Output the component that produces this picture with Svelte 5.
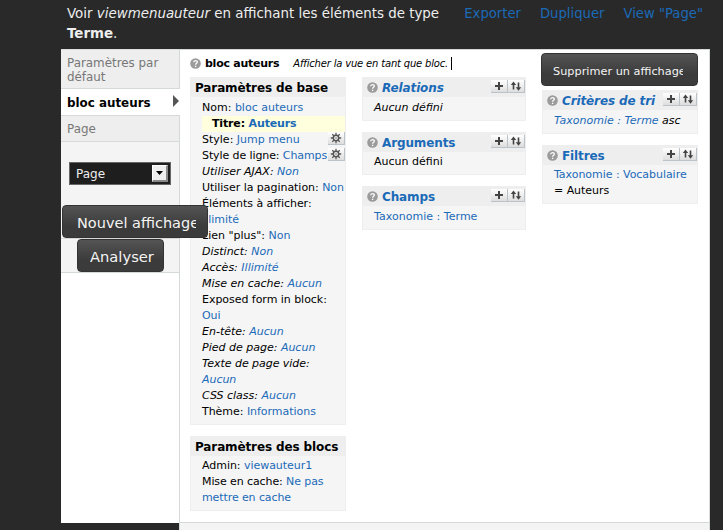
<script>
  const base = [
    { k: 'Nom:', v: 'bloc auteurs' },
    { k: 'Titre:', v: 'Auteurs', hot: true },
    { k: 'Style:', v: 'Jump menu', gear: true },
    { k: 'Style de ligne:', v: 'Champs', gear: true, tight: true },
    { k: 'Utiliser AJAX:', v: 'Non', i: true },
    { k: 'Utiliser la pagination:', v: 'Non', snug: true },
    { k: 'Éléments à afficher:', v: 'Illimité', br: true, snug: true },
    { k: 'Lien "plus":', v: 'Non' },
    { k: 'Distinct:', v: 'Non', i: true },
    { k: 'Accès:', v: 'Illimité', i: true },
    { k: 'Mise en cache:', v: 'Aucun', i: true },
    { k: 'Exposed form in block:', v: 'Oui', br: true, snug: true },
    { k: 'En-tête:', v: 'Aucun', i: true },
    { k: 'Pied de page:', v: 'Aucun', i: true },
    { k: 'Texte de page vide:', v: 'Aucun', i: true, br: true, snug: true },
    { k: 'CSS class:', v: 'Aucun', i: true },
    { k: 'Thème:', v: 'Informations', snug: true }
  ];
</script>

{#snippet help()}
  <svg class="help" width="11" height="11" viewBox="0 0 11 11">
    <circle cx="5.5" cy="5.5" r="5.3" fill="#9b9b9b" />
    <path d="M3.7 4.3C3.7 2 7.4 2 7.4 4.1C7.4 5.3 5.6 5.3 5.6 6.8M5.6 7.7V9" fill="none" stroke="#fff" stroke-width="1.3" />
  </svg>
{/snippet}

{#snippet tools()}
  <span class="tools">
    <span class="tool"><svg width="16" height="12" viewBox="0 0 16 12"><path d="M4 6h8M8 2v8" stroke="#444" stroke-width="2" /></svg></span>
    <span class="tool"><svg width="16" height="12" viewBox="0 0 16 12"><path d="M5.5 9.5V4M10.5 2.5v6" stroke="#444" stroke-width="1.6" /><path d="M2.8 5L5.5 1.5L8.2 5zM7.8 7.2L10.5 10.7L13.2 7.2z" fill="#444" /></svg></span>
  </span>
{/snippet}

{#snippet gear()}
  <span class="gear"><svg width="16" height="12" viewBox="0 0 16 12"><path d="M8 .8v10.4M2.8 6h10.4M4.3 2.3l7.4 7.4M11.7 2.3L4.3 9.7" stroke="#555" stroke-width="1.3" /><circle cx="8" cy="6" r="2.7" fill="#eee" stroke="#555" stroke-width="1.5" /><circle cx="8" cy="6" r=".8" fill="#777" /></svg></span>
{/snippet}

<div class="page">
  <header>
    <p>Voir <em>viewmenuauteur</em> en affichant les éléments de type <b>Terme</b>.</p>
    <nav><a>Exporter</a><a>Dupliquer</a><a>View "Page"</a></nav>
  </header>
  <main>
    <aside>
      <div class="tab first">Paramètres par<br />défaut</div>
      <div class="tab active">bloc auteurs<svg width="6" height="12" viewBox="0 0 6 12"><path d="M0 0L6 6L0 12z" fill="#555" /></svg></div>
      <div class="tab last">Page</div>
      <div class="add">
        <div class="select"><span>Page</span><i><svg width="7" height="4" viewBox="0 0 7 4"><path d="M0 0h7L3.5 4z" fill="#000" /></svg></i></div>
        <div class="btn new"><span>Nouvel affichage</span></div>
      </div>
      <div class="analyse"><div class="btn"><span>Analyser</span></div></div>
    </aside>
    <div class="right">
      <section class="content">
        <div class="wide">
          <div class="caption">{@render help()}<b>bloc auteurs</b><em>Afficher la vue en tant que bloc.</em><u></u></div>
          <div class="cols">
            <div class="col c1">
              <div class="box">
                <h3>Paramètres de base</h3>
                <div class="rows r2">
                  {#each base as r}
                    <div class="row" class:hot={r.hot} class:it={r.i} class:tight={r.tight} class:snug={r.snug}>{r.k}{#if r.br}<br />{:else}{' '}{/if}<a>{r.v}</a>{#if r.gear}{@render gear()}{/if}</div>
                  {/each}
                </div>
              </div>
              <div class="box">
                <h3>Paramètres des blocs</h3>
                <div class="rows">
                  <div class="row snug">Admin: <a>viewauteur1</a></div>
                  <div class="row tight">Mise en cache: <a>Ne pas<br />mettre en cache</a></div>
                </div>
              </div>
            </div>
            <div class="col c2">
              <div class="box">
                <h3>{@render help()}<a class="it">Relations</a>{@render tools()}</h3>
                <div class="rows r2"><div class="row it">Aucun défini</div></div>
              </div>
              <div class="box">
                <h3>{@render help()}<a>Arguments</a>{@render tools()}</h3>
                <div class="rows"><div class="row">Aucun défini</div></div>
              </div>
              <div class="box">
                <h3>{@render help()}<a>Champs</a>{@render tools()}</h3>
                <div class="rows r2"><div class="row wider"><a>Taxonomie : Terme</a></div></div>
              </div>
            </div>
          </div>
        </div>
        <div class="col c3">
          <div class="btn del"><span>Supprimer un affichage</span></div>
          <div class="box">
            <h3>{@render help()}<a class="it">Critères de tri</a>{@render tools()}</h3>
            <div class="rows r2"><div class="row it"><a>Taxonomie : Terme</a> asc</div></div>
          </div>
          <div class="box">
            <h3>{@render help()}<a>Filtres</a>{@render tools()}</h3>
            <div class="rows"><div class="row snug"><a>Taxonomie : Vocabulaire</a><br />= Auteurs</div></div>
          </div>
        </div>
      </section>
      <div class="foot"></div>
    </div>
  </main>
</div>

<style>
  :global(body) { background: #292929; }
  .page { width: 723px; height: 530px; overflow: hidden; background: #292929; font-family: 'DejaVu Sans', Verdana, sans-serif; font-size: 11px; color: #000; white-space: nowrap; }
  a { color: #1b6ab8; }
  header { height: 49px; padding-left: 67px; display: flex; justify-content: space-between; box-sizing: border-box; font-size: 13.4px; line-height: 20px; color: #eee; padding-top: 4px; padding-right: 20px; }
  header p { margin: 0; width: 385px; white-space: normal; }
  nav { display: flex; gap: 19px; font-size: 13.2px; }
  main { margin-left: 61px; width: 649px; height: 481px; display: flex; }
  aside { width: 118px; height: 474px; background: #fff; position: relative; z-index: 2; border-top: 1px solid #ddd; box-sizing: border-box; }
  .tab { box-sizing: border-box; background: #eee; border-bottom: 1px solid #d6d9d9; color: #777; font-size: 11.9px; padding: 6px 0 0 6px; line-height: 14px; height: 26px; }
  .first { height: 39px; }
  .active { background: #fff; color: #000; font-weight: bold; height: 27px; padding-top: 7px; display: flex; justify-content: space-between; width: 119px; }
  .active svg { margin: -1px 1px 0 0; }
  .add { height: 97px; background: #f4f4f4; border-bottom: 1px solid #d6d9d9; box-sizing: border-box; padding-top: 20px; }
  .analyse { height: 34px; background: #f4f4f4; border-bottom: 1px solid #d6d9d9; box-sizing: border-box; padding-left: 16px; }
  .select { margin-left: 8px; width: 102px; height: 23px; border: 1px solid #666; box-sizing: border-box; background: #1e1e1e; color: #eee; padding: 2px 2px 2px 6px; display: flex; align-items: center; justify-content: space-between; font-size: 12px; }
  .select i { width: 16px; height: 17px; box-sizing: border-box; background: #eee; border: 1px solid #fff; border-right: 2px solid #888; border-bottom: 2px solid #888; display: flex; align-items: center; justify-content: center; }
  .btn { box-sizing: border-box; width: 87px; height: 33px; border-radius: 4px; border: 1px solid #333; background: linear-gradient(#545454, #3b3b3b 65%); color: #f4f4f4; font-size: 14.7px; line-height: 34px; padding: 0 8px 0 12px; }
  .btn span { display: block; overflow: hidden; height: 31px; }
  .new { width: 146px; margin: 20px 0 0 1px; padding: 0 11px 0 14px; font-size: 14.5px; line-height: 35px; }
  .right { width: 531px; display: flex; flex-direction: column; border: 1px solid #d6d9d9; border-bottom: 0; box-sizing: border-box; }
  .content { height: 472px; background: #fff; display: flex; flex: none; }
  .foot { flex: 1; border-top: 1px solid #d6d9d9; background: #f4f4f4; }
  .wide { width: 362px; }
  .caption { height: 27px; box-sizing: border-box; padding: 0 0 0 10px; display: flex; align-items: center; }
  .caption b { margin-left: 4px; letter-spacing: -.25px; }
  .caption em { margin-left: 14px; font-size: 10px; letter-spacing: -.18px; }
  .caption u { width: 1px; height: 13px; background: #000; margin-left: 3px; }
  .cols { display: flex; gap: 16px; padding-left: 10px; align-items: flex-start; }
  .col { display: flex; flex-direction: column; gap: 11px; }
  .c1 { width: 156px; }
  .c2 { width: 164px; }
  .c3 { width: 156px; padding-top: 3px; }
  .del { width: 157px; margin: 0 0 -7px -1px; font-size: 11.3px; line-height: 35px; padding: 0 14px 0 11px; }
  .box { background: #f5f5f5; border: 1px solid #eee; border-top: 0; }
  h3 { margin: 0 -1px; height: 20px; background: #eee; box-sizing: border-box; padding: 2px 1px 0 5px; display: flex; align-items: center; font-size: 12px; letter-spacing: -.12px; line-height: 18px; }
  h3 .help { margin-top: -2px; }
  h3 a { margin-left: 4px; }
  .it { font-style: italic; }
  .rows { padding: 2px 0 4px 11px; line-height: 16px; }
  .r2 { padding-top: 3px; }
  .row { position: relative; }
  .tight { letter-spacing: -.1px; }
  .snug { letter-spacing: -.04px; }
  .wider { letter-spacing: .03px; }
  .hot { background: #ffd; padding-left: 10px; font-weight: bold; letter-spacing: -.15px; }
  .tools { margin-left: auto; display: flex; align-self: flex-start; margin-top: 1px; }
  .tool, .gear { box-sizing: border-box; width: 17px; height: 13px; background: linear-gradient(#fff, #ddd); border-right: 1px solid #bbc2c8; border-bottom: 1px solid #bbc2c8; display: block; }
  .tool svg, .gear svg { display: block; }
  .gear { position: absolute; right: 0; top: 0; }
</style>
